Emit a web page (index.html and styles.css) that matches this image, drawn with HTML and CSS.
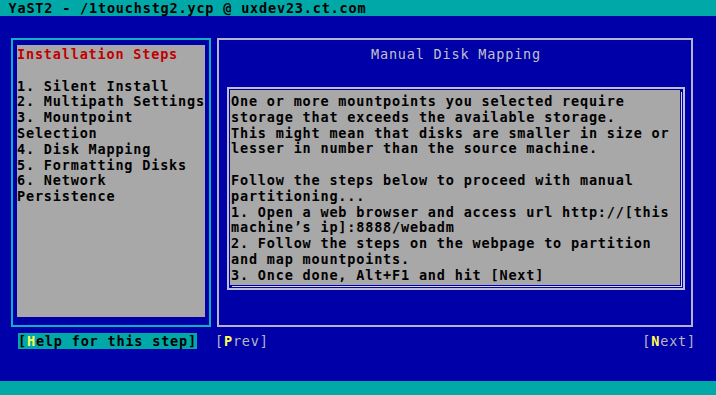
FILE: index.html
```html
<!DOCTYPE html>
<html lang="en">
<head>
<meta charset="utf-8">
<title>YaST2 - Manual Disk Mapping</title>
<link rel="stylesheet" href="styles.css">
</head>
<body>
<div class="screen">
  <header class="titlebar">YaST2 - /1touchstg2.ycp @ uxdev23.ct.com</header>
  <main class="main">
    <div class="panes">
      <aside class="steps-frame">
        <div class="steps">
          <div class="line steps-title">Installation Steps</div>
          <div class="line">&nbsp;</div>
          <div class="line">1. Silent Install</div>
          <div class="line">2. Multipath Settings</div>
          <div class="line">3. Mountpoint</div>
          <div class="line">Selection</div>
          <div class="line">4. Disk Mapping</div>
          <div class="line">5. Formatting Disks</div>
          <div class="line">6. Network</div>
          <div class="line">Persistence</div>
        </div>
      </aside>
      <section class="dialog">
        <h1 class="dialog-title">Manual Disk Mapping</h1>
        <div class="msg-frame">
          <div class="msg">
            <div class="line">One or more mountpoints you selected require</div>
            <div class="line">storage that exceeds the available storage.</div>
            <div class="line">This might mean that disks are smaller in size or</div>
            <div class="line">lesser in number than the source machine.</div>
            <div class="line">&nbsp;</div>
            <div class="line">Follow the steps below to proceed with manual</div>
            <div class="line">partitioning...</div>
            <div class="line">1. Open a web browser and access url http://[this</div>
            <div class="line">machine’s ip]:8888/webadm</div>
            <div class="line">2. Follow the steps on the webpage to partition</div>
            <div class="line">and map mountpoints.</div>
            <div class="line">3. Once done, Alt+F1 and hit [Next]</div>
          </div>
        </div>
      </section>
    </div>
    <div class="buttons">
      <div class="btn-group">
        <span class="btn btn-focus">[<span class="hot">H</span>elp for this step]</span>
        <span class="btn">[<span class="hot">P</span>rev]</span>
      </div>
      <span class="btn">[<span class="hot">N</span>ext]</span>
    </div>
  </main>
  <footer class="statusbar"></footer>
</div>
</body>
</html>
```

FILE: styles.css
```css
* { box-sizing: border-box; }
html, body {
  margin: 0;
  padding: 0;
  background: #0000a8;
}
body {
  font-family: "DejaVu Sans Mono", "Liberation Mono", monospace;
  font-size: 13.5px;
  letter-spacing: 0.82px;
  line-height: 15.8px;
  font-weight: bold;
  color: #000;
}
.screen {
  width: 716px;
  height: 395px;
  display: flex;
  flex-direction: column;
  background: #0000a8;
  overflow: hidden;
}
.titlebar {
  height: 16px;
  line-height: 16px;
  background: #00a8a8;
  color: #000;
  padding-left: 8.5px;
  white-space: pre;
}
.main {
  flex: 1;
  display: flex;
  flex-direction: column;
}
.panes {
  display: flex;
  margin-top: 22px;
  gap: 6px;
  padding-left: 11px;
}
.steps-frame {
  width: 200px;
  height: 289px;
  border: 2px solid #10b0c0;
  padding: 5px 4px 8px 4px;
}
.steps {
  height: 100%;
  background: #a8a8a8;
  padding-top: 2px;
  overflow: hidden;
}
.steps-title {
  color: #c00000;
}
.line {
  height: 15.8px;
  white-space: pre;
}
.dialog {
  width: 476px;
  height: 289px;
  border: 2px solid #b4b4d0;
  display: flex;
  flex-direction: column;
}
.dialog-title {
  margin: 6px 0 0 0;
  font-size: inherit;
  line-height: 16px;
  font-weight: normal;
  color: #c0c0c8;
  text-align: center;
  padding-left: 2px;
}
.msg-frame {
  margin: 25px 6px 0 8px;
  height: 203px;
  border: 2px solid #c0c0d4;
  padding: 1px 3px 3px 1px;
  display: flex;
}
.msg {
  flex: 1;
  background: #a8a8a8;
  padding: 4px 0 0 1px;
  box-shadow: 1px 1px 0 #0000a8, 2px 2px 0 #d8d8e0;
  overflow: hidden;
}
.buttons {
  display: flex;
  justify-content: space-between;
  align-items: center;
  margin-top: 6px;
  padding: 0 20px 0 18px;
}
.btn-group {
  display: flex;
  gap: 18px;
}
.btn {
  height: 16px;
  line-height: 16px;
  white-space: pre;
  color: #b8b8c0;
  font-weight: normal;
}
.btn-focus {
  background: #00a8a8;
  color: #000;
  font-weight: bold;
}
.hot {
  color: #ffff54;
  font-weight: bold;
}
.statusbar {
  height: 14px;
  margin-top: auto;
  background: #00a8a8;
}
```
